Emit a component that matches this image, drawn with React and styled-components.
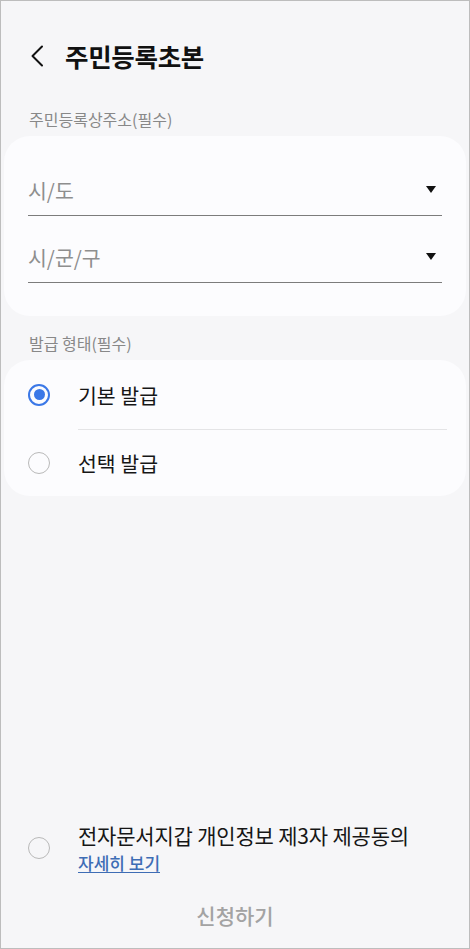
import styled, { createGlobalStyle } from "styled-components";

const GlobalStyle = createGlobalStyle`
  * { box-sizing: border-box; }
  body {
    margin: 0;
    background: #f6f6f8;
    font-family: "Noto Sans CJK KR", "Noto Sans", sans-serif;
  }
`;

const Screen = styled.div`
  width: 470px;
  height: 949px;
  border: 1px solid #bdbdbd;
  background: #f6f6f8;
  display: flex;
  flex-direction: column;
  padding: 0 3px;
  overflow: hidden;
`;

const Header = styled.div`
  margin-top: 37px;
  height: 36px;
  display: flex;
  align-items: center;
  padding-left: 25px;
  gap: 20px;
`;

const BackButton = styled.button`
  border: none;
  background: none;
  padding: 0;
  width: 16px;
  height: 24px;
  display: flex;
  align-items: center;
  justify-content: center;
  cursor: pointer;
`;

const Title = styled.h1`
  margin: 0;
  font-size: 25.5px;
  font-weight: 700;
  color: #111;
  line-height: 36px;
  letter-spacing: -0.3px;
`;

const SectionLabel = styled.div`
  margin: ${(p) => p.$top}px 0 7px 25px;
  font-size: 16px;
  line-height: 20px;
  color: #888;
`;

const Card = styled.div`
  background: #fcfcfe;
  border-radius: 26px;
  padding: ${(p) => p.$padding || "0"};
`;

const FieldList = styled.div`
  display: flex;
  flex-direction: column;
  gap: 17px;
  padding: 0 24px;
`;

const Field = styled.div`
  height: ${(p) => p.$h}px;
  display: flex;
  align-items: center;
  justify-content: space-between;
  border-bottom: 1px solid #7c7c7c;
  padding-right: 6px;
  padding-bottom: 2px;
  cursor: pointer;
`;

const Placeholder = styled.span`
  font-size: 20.5px;
  color: #8e8e8e;
`;

const Caret = styled.span`
  width: 0;
  height: 0;
  border-left: 5.5px solid transparent;
  border-right: 5.5px solid transparent;
  border-top: 7px solid #111;
`;

const Option = styled.label`
  height: ${(p) => p.$h}px;
  display: flex;
  align-items: center;
  padding-left: 24px;
  gap: 28px;
  cursor: pointer;
`;

const Radio = styled.span`
  width: 22px;
  height: 22px;
  border-radius: 50%;
  flex-shrink: 0;
  border: ${(p) => (p.$checked ? "2.5px solid #3b78e7" : "1.5px solid #b9b9b9")};
  display: flex;
  align-items: center;
  justify-content: center;
  &::after {
    content: "";
    display: ${(p) => (p.$checked ? "block" : "none")};
    width: 11px;
    height: 11px;
    border-radius: 50%;
    background: #3b78e7;
  }
`;

const OptionText = styled.span`
  font-size: 20.5px;
  color: #161616;
  font-weight: 400;
`;

const Divider = styled.div`
  height: 1px;
  background: #e4e4e6;
  margin: 0 19px 0 74px;
`;

const Spacer = styled.div`
  flex: 1;
`;

const Consent = styled.div`
  display: flex;
  align-items: center;
  padding-left: 24px;
  gap: 28px;
`;

const ConsentText = styled.div`
  display: flex;
  flex-direction: column;
  gap: 5px;
`;

const ConsentTitle = styled.span`
  font-size: 21px;
  line-height: 25px;
  color: #161616;
  font-weight: 400;
  letter-spacing: -0.2px;
`;

const DetailLink = styled.a`
  align-self: flex-start;
  font-size: 17px;
  line-height: 19px;
  font-weight: 500;
  color: #3e6db5;
  text-decoration: none;
  border-bottom: 1px solid #3e6db5;
  cursor: pointer;
`;

const Submit = styled.button`
  margin-top: 9px;
  height: 66px;
  border: none;
  background: none;
  font-family: inherit;
  font-size: 21px;
  font-weight: 500;
  color: #a3a3a3;
  padding-bottom: 2px;
`;

export default function App() {
  return (
    <>
      <GlobalStyle />
      <Screen>
        <Header>
          <BackButton aria-label="뒤로">
            <svg width="14" height="22" viewBox="0 0 14 22" fill="none">
              <path d="M12 1.5 2.5 11l9.5 9.5" stroke="#111" strokeWidth="2" strokeLinecap="round" strokeLinejoin="round" />
            </svg>
          </BackButton>
          <Title>주민등록초본</Title>
        </Header>

        <SectionLabel $top={35}>주민등록상주소(필수)</SectionLabel>
        <Card $padding="30px 0 33px">
          <FieldList>
            <Field $h={50}>
              <Placeholder>시/도</Placeholder>
              <Caret />
            </Field>
            <Field $h={50}>
              <Placeholder>시/군/구</Placeholder>
              <Caret />
            </Field>
          </FieldList>
        </Card>

        <SectionLabel $top={17}>발급 형태(필수)</SectionLabel>
        <Card>
          <Option $h={69}>
            <Radio $checked />
            <OptionText>기본 발급</OptionText>
          </Option>
          <Divider />
          <Option $h={66}>
            <Radio />
            <OptionText>선택 발급</OptionText>
          </Option>
        </Card>

        <Spacer />

        <Consent>
          <Radio />
          <ConsentText>
            <ConsentTitle>전자문서지갑 개인정보 제3자 제공동의</ConsentTitle>
            <DetailLink>자세히 보기</DetailLink>
          </ConsentText>
        </Consent>
        <Submit>신청하기</Submit>
      </Screen>
    </>
  );
}
